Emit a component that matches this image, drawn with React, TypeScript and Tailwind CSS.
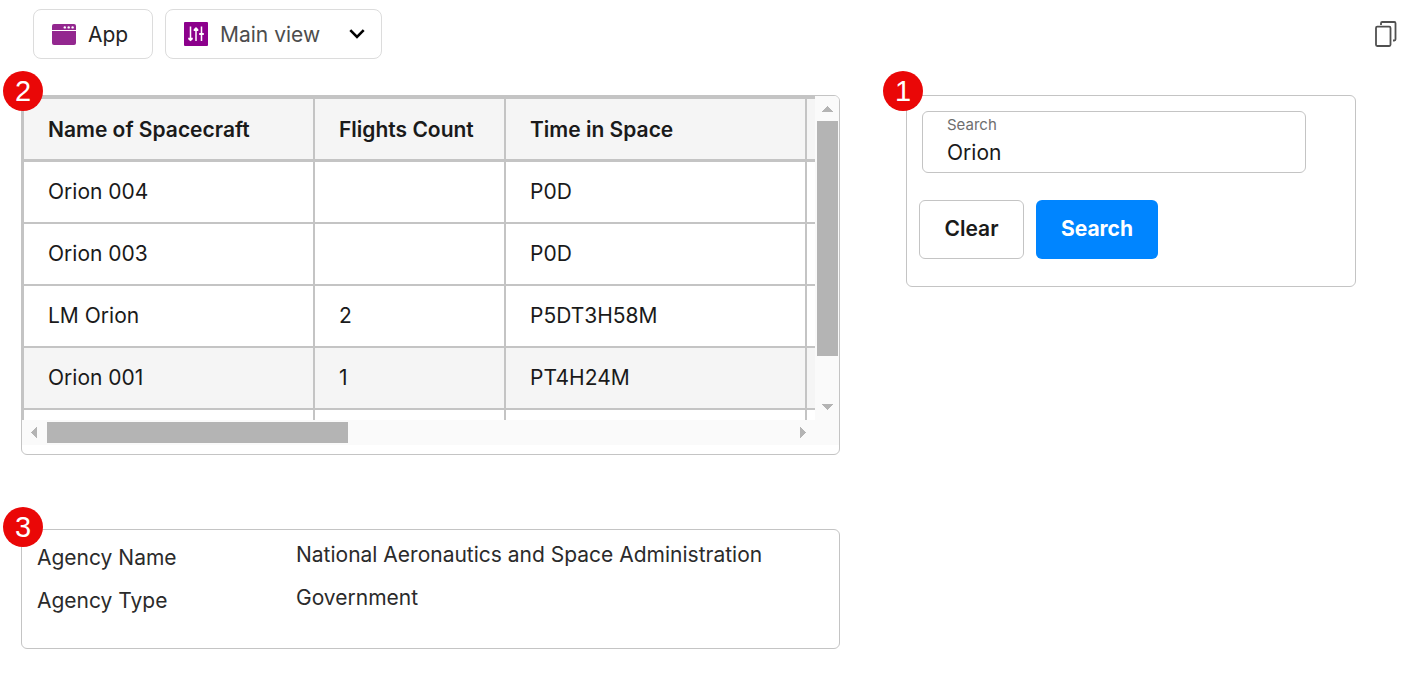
import { useState, type ReactNode } from "react";

type Craft = { name: string; flights: string; time: string };

const CRAFTS: Craft[] = [
  { name: "Orion 004", flights: "", time: "P0D" },
  { name: "Orion 003", flights: "", time: "P0D" },
  { name: "LM Orion", flights: "2", time: "P5DT3H58M" },
  { name: "Orion 001", flights: "1", time: "PT4H24M" },
  { name: "", flights: "", time: "" },
];

const AGENCY = [
  ["Agency Name", "National Aeronautics and Space Administration"],
  ["Agency Type", "Government"],
];

function Badge({ place, children }: { place: string; children: ReactNode }) {
  return (
    <span className={`absolute z-10 flex size-10 items-center justify-center rounded-full bg-[#ea0707] font-['Liberation_Sans',sans-serif] text-[29px] leading-10 text-white ${place}`}>
      {children}
    </span>
  );
}

function Arrow({ dir }: { dir: "up" | "down" | "left" | "right" }) {
  const points = {
    up: "7,16 18,16 12.5,10",
    down: "7,9 18,9 12.5,15",
    left: "15,7 15,18 9,12.5",
    right: "10,7 10,18 16,12.5",
  }[dir];
  return (
    <button type="button" aria-label={`Scroll ${dir}`} className="size-[25px] shrink-0">
      <svg width="25" height="25" fill="#b4b4b4" shapeRendering="crispEdges">
        <polygon points={points} />
      </svg>
    </button>
  );
}

function Toolbar() {
  return (
    <header className="flex items-center gap-3 pl-[33px] pr-2.5 pt-[9px]">
      <button type="button" className="flex h-[50px] w-[120px] items-center gap-3 rounded-lg border border-[#dcdcdc] pl-[18px] text-[#242424]">
        <svg width="24" height="21" viewBox="0 0 24 21">
          <path d="M2 0h20a2 2 0 0 1 2 2v4H0V2a2 2 0 0 1 2-2Z" fill="#93278f" />
          <path d="M0 7h24v12a2 2 0 0 1-2 2H2a2 2 0 0 1-2-2Z" fill="#93278f" />
          <g fill="#fff">
            <circle cx="12.8" cy="3.4" r="1.2" />
            <circle cx="16.7" cy="3.4" r="1.2" />
            <circle cx="20.6" cy="3.4" r="1.2" />
          </g>
        </svg>
        <span className="pt-0.5">App</span>
      </button>
      <label className="grid h-[50px] w-[217px] grid-cols-[24px_1fr_16px] items-center rounded-lg border border-[#dcdcdc] pl-[18px] pr-4">
        <svg width="24" height="24" viewBox="0 0 24 24" className="row-start-1">
          <rect width="24" height="24" rx="1" fill="#8c008c" />
          <g stroke="#fff" strokeWidth="1.5" fill="none">
            <path d="M6.500 4.500v14M12 6v13M17.500 4.500v14.500" />
          </g>
          <g fill="#fff">
            <path d="M4.200 15.800h4.600v1.400L6.500 19.300 4.200 17.200Z" />
            <path d="M9.700 9h4.600V7.200L12 5 9.700 7.200Z" />
            <path d="M15.200 11h4.600v2h-4.600Z" />
          </g>
        </svg>
        <select aria-label="View" className="col-span-2 col-start-2 row-start-1 h-12 w-full appearance-none bg-transparent pl-3 pt-0.5 text-[#4d4d4d] outline-none">
          <option>Main view</option>
        </select>
        <svg width="16" height="10" viewBox="0 0 16 10" className="pointer-events-none col-start-3 row-start-1" fill="none" stroke="#000" strokeWidth="2.6">
          <path d="M1.300 1.200 8 7.900l6.700-6.700" />
        </svg>
      </label>
      <button type="button" aria-label="Copy" className="ml-auto">
        <svg width="22" height="26" viewBox="0 0 22 26" fill="none" stroke="#505050" strokeWidth="1.800">
          <rect x="1" y="5.700" width="14.500" height="19.300" rx="1.200" />
          <path d="M6 4V2.200A1.200 1.200 0 0 1 7.200 1H19.300a1.200 1.200 0 0 1 1.200 1.200V18.300a1.200 1.200 0 0 1-1.200 1.200H18" />
        </svg>
      </button>
    </header>
  );
}

function SpacecraftTable() {
  const cell = "border-b-2 border-r-2 border-[#c4c4c4] px-6 py-0";
  const head = "border-b-3 border-r-2 border-t-3 border-[#c4c4c4] bg-[#f5f5f5] px-6 pb-0 pt-0.5 text-left font-semibold";
  return (
    <section className="relative rounded-md border border-[#c4c4c4] pb-[9px]">
      <Badge place="-left-[19px] -top-[25px]">2</Badge>
      <div className="overflow-hidden rounded-t-[5px]">
        <div className="flex h-[324px]">
          <div className="min-w-0 flex-1 overflow-hidden">
            <table className="w-[1180px] table-fixed border-separate border-spacing-0 border-l-2 border-[#c4c4c4]">
              <colgroup>
                <col className="w-[291px]" />
                <col className="w-[191px]" />
                <col className="w-[301px]" />
                <col />
              </colgroup>
              <thead>
                <tr className="h-[66px]">
                  <th className={head}>Name of Spacecraft</th>
                  <th className={head}>Flights Count</th>
                  <th className={head}>Time in Space</th>
                  <th className={head} />
                </tr>
              </thead>
              <tbody>
                {CRAFTS.map((c, i) => (
                  <tr key={i} className={i === 3 ? "h-[62px] bg-[#f5f5f5]" : "h-[62px]"}>
                    <td className={cell}>{c.name}</td>
                    <td className={cell}>{c.flights}</td>
                    <td className={cell}>{c.time}</td>
                    <td className={cell} />
                  </tr>
                ))}
              </tbody>
            </table>
          </div>
          <div className="flex w-6 shrink-0 flex-col bg-[#fafafa]">
            <Arrow dir="up" />
            <div className="min-h-0 flex-1 pl-0.5">
              <div className="h-[235px] w-[21px] bg-[#b4b4b4]" />
            </div>
            <Arrow dir="down" />
          </div>
        </div>
        <div className="flex bg-[#fafafa] pr-6">
          <Arrow dir="left" />
          <div className="flex-1 py-0.5">
            <div className="h-[21px] w-[301px] bg-[#b4b4b4]" />
          </div>
          <Arrow dir="right" />
        </div>
      </div>
    </section>
  );
}

function SearchPanel() {
  const [term, setTerm] = useState("Orion");
  return (
    <form onSubmit={(e) => e.preventDefault()} className="relative rounded-md border border-[#c4c4c4] pb-[27px] pl-3 pt-[15px]">
      <Badge place="-left-6 -top-[25px]">1</Badge>
      <div className="ml-[3px] mr-[49px] flex h-[62px] flex-col rounded-md border border-[#c4c4c4] px-6 pt-1">
        <label htmlFor="term" className="text-[15px] leading-[18px] text-[#6e6e6e]">
          Search
        </label>
        <input id="term" value={term} onChange={(e) => setTerm(e.target.value)} className="h-9 w-full bg-transparent outline-none" />
      </div>
      <div className="mt-[27px] flex gap-3">
        <button type="button" onClick={() => setTerm("")} className="h-[59px] w-[105px] rounded-md border border-[#c4c4c4] pb-0.5 font-semibold">
          Clear
        </button>
        <button type="submit" className="h-[59px] w-[122px] rounded-md bg-[#0085ff] pb-0.5 font-bold text-white">
          Search
        </button>
      </div>
    </form>
  );
}

function AgencyPanel() {
  return (
    <section className="relative rounded-md border border-[#c4c4c4] px-[15px] pb-[33px] pt-[11px] text-[#2b2b2b]">
      <Badge place="-left-[19px] -top-[23px]">3</Badge>
      <dl className="grid grid-cols-[259px_1fr] gap-y-3">
        {AGENCY.map(([label, value]) => (
          <div key={label} className="contents">
            <dt className="pt-[3px] leading-7">{label}</dt>
            <dd className="leading-7">{value}</dd>
          </div>
        ))}
      </dl>
    </section>
  );
}

export default function App() {
  return (
    <div className="min-h-screen bg-white font-[Inter,sans-serif] text-[21px] text-[#1a1a1a]">
      <Toolbar />
      <main className="grid grid-cols-[minmax(0,819fr)_minmax(0,450fr)] items-start gap-x-[66px] pb-[31px] pl-[21px] pr-[51px] pt-9">
        <div className="flex min-w-0 flex-col gap-[74px]">
          <SpacecraftTable />
          <AgencyPanel />
        </div>
        <SearchPanel />
      </main>
    </div>
  );
}
